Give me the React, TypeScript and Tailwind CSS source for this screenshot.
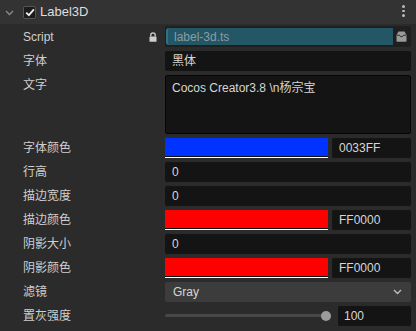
import React from "react";

const font = { fontFamily: '"Liberation Sans", "Noto Sans CJK SC", sans-serif' };

function Row({ label, children, extra }: { label: string; children: React.ReactNode; extra?: React.ReactNode }) {
  return (
    <div className="flex items-start">
      <div className="relative flex h-[20px] w-[165px] shrink-0 items-center pl-[23px] text-[12px] text-[#cfcfcf]">
        {label}
        {extra}
      </div>
      <div className="w-[246px]">{children}</div>
    </div>
  );
}

function Field({ text }: { text: string }) {
  return (
    <div className="flex h-[20px] items-center rounded-[2px] bg-[#141414] pl-[7px] text-[12px] text-[#d6d6d6]">{text}</div>
  );
}

function ColorField({ color, hex }: { color: string; hex: string }) {
  return (
    <div className="flex h-[20px] gap-[4px]">
      <div className="flex w-[163px] flex-col">
        <div className="h-[18px]" style={{ background: color }} />
        <div className="h-[1px] bg-[#111]" />
        <div className="h-[1px] bg-white" />
      </div>
      <div className="flex flex-1 items-center rounded-[2px] bg-[#141414] pl-[7px] text-[12px] text-[#d6d6d6]">{hex}</div>
    </div>
  );
}

export default function App() {
  return (
    <div className="h-[331px] w-[416px] overflow-hidden bg-[#2b2b2b]" style={font}>
      <div className="relative flex h-[24px] items-center bg-[#333333]">
        <svg className="absolute left-[5px] top-[10px]" width="9" height="6" viewBox="0 0 9 6">
          <path d="M1 1 L4.5 4.5 L8 1" stroke="#8a8a8a" strokeWidth="1.4" fill="none" />
        </svg>
        <div className="absolute left-[23px] top-[6px] flex h-[13px] w-[13px] items-center justify-center rounded-[2px] border border-[#555] bg-[#1c1c1c]">
          <svg width="10" height="9" viewBox="0 0 10 9">
            <path d="M1.2 4.6 L3.9 7.2 L8.9 1.4" stroke="#eeeeee" strokeWidth="1.9" fill="none" />
          </svg>
        </div>
        <span className="absolute left-[40px] top-[4px] text-[13px] leading-[16px] text-[#dedede]">Label3D</span>
        <div className="absolute left-[402px] top-[5px] flex flex-col gap-[2px]">
          <div className="h-[2.5px] w-[2.5px] rounded-full bg-[#bbb]" />
          <div className="h-[2.5px] w-[2.5px] rounded-full bg-[#bbb]" />
          <div className="h-[2.5px] w-[2.5px] rounded-full bg-[#bbb]" />
        </div>
      </div>
      <div className="flex flex-col gap-[4px] pt-[2px]">
        <div className="flex items-start">
          <div className="relative flex h-[21px] w-[165px] shrink-0 items-center pl-[23px] text-[12px] text-[#cfcfcf]">
            Script
            <svg className="absolute left-[149px] top-[6px]" width="8" height="10" viewBox="0 0 8 10">
              <path d="M1.8 4.5 V3 a2.2 2.2 0 0 1 4.4 0 V4.5" stroke="#cfcfcf" strokeWidth="1.3" fill="none" />
              <rect x="0.5" y="4.5" width="7" height="5.3" rx="0.6" fill="#cfcfcf" />
            </svg>
          </div>
          <div className="flex h-[21px] w-[246px] items-center rounded-[2px] bg-[#1f1f1f] pl-[1px] pr-[1px]">
            <div className="flex h-[17px] w-[227px] items-center rounded-l-[3px] border-l-[2px] border-[#2d7388] bg-[#235766] pl-[6px] text-[12px] text-[#8d9ca0]">
              label-3d.ts
            </div>
            <div className="flex flex-1 items-center justify-center">
              <svg width="11" height="11" viewBox="0 0 11 11">
                <path d="M2.5 0.5 H8.5 L10.5 4 V10 a0.8 0.8 0 0 1 -0.8 0.8 H1.3 a0.8 0.8 0 0 1 -0.8 -0.8 V4 Z" fill="#9a9a9a" />
                <path d="M0.8 4.2 H3.5 L4.5 5.6 H6.5 L7.5 4.2 H10.2" stroke="#2a2a2a" strokeWidth="1" fill="none" />
              </svg>
            </div>
          </div>
        </div>
        <Row label="字体">
          <Field text="黑体" />
        </Row>
        <div className="flex items-start">
          <div className="flex h-[20px] w-[165px] shrink-0 items-center pl-[23px] text-[12px] text-[#cfcfcf]">文字</div>
          <div className="h-[59px] w-[246px] rounded-[2px] border border-[#050505] bg-[#141414] pl-[6px] pt-[4px] text-[12px] leading-[16px] text-[#d6d6d6]">
            Cocos Creator3.8 \n杨宗宝
          </div>
        </div>
        <Row label="字体颜色">
          <ColorField color="#0033ff" hex="0033FF" />
        </Row>
        <Row label="行高">
          <Field text="0" />
        </Row>
        <Row label="描边宽度">
          <Field text="0" />
        </Row>
        <Row label="描边颜色">
          <ColorField color="#ff0000" hex="FF0000" />
        </Row>
        <Row label="阴影大小">
          <Field text="0" />
        </Row>
        <Row label="阴影颜色">
          <ColorField color="#ff0000" hex="FF0000" />
        </Row>
        <Row label="滤镜">
          <div className="flex h-[20px] items-center justify-between rounded-[2px] bg-[#3c3c3c] pl-[8px] pr-[9px] text-[12px] text-[#d6d6d6]">
            <span>Gray</span>
            <svg width="9" height="6" viewBox="0 0 9 6">
              <path d="M1 1 L4.5 4.5 L8 1" stroke="#bbbbbb" strokeWidth="1.4" fill="none" />
            </svg>
          </div>
        </Row>
        <Row label="置灰强度">
          <div className="flex h-[20px] items-center gap-[7px]">
            <div className="relative h-[20px] w-[166px]">
              <div className="absolute left-0 right-[4px] top-[8px] h-[3px] rounded-full bg-[#484848]" />
              <div className="absolute left-[156px] top-[5px] h-[10px] w-[10px] rounded-full bg-[#9c9c9c]" />
            </div>
            <div className="flex h-[20px] flex-1 items-center rounded-[2px] bg-[#141414] pl-[6px] text-[12px] text-[#d6d6d6]">100</div>
          </div>
        </Row>
      </div>
    </div>
  );
}
